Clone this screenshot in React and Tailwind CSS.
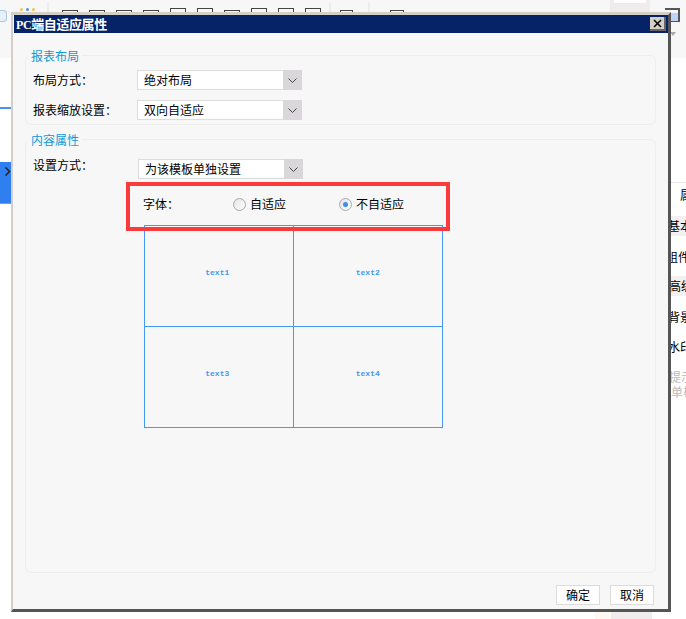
import React from 'react';

const cjk = "font-['Noto_Sans_CJK_SC','Liberation_Sans',sans-serif]";

const Select = ({ value, className = '' }) => (
  <div className={`flex h-5 w-[165px] border border-[#dcdcdc] bg-white ${className}`}>
    <div className="flex-1 pl-[6px] text-[12px] leading-[18px] text-black">{value}</div>
    <div className="-my-px -mr-px flex w-[19px] items-center justify-center bg-[#d9d7d9]">
      <svg width="9" height="5" viewBox="0 0 9 5" fill="none" stroke="#444" strokeWidth="1">
        <path d="M.5.5l4 4 4-4" />
      </svg>
    </div>
  </div>
);

const Group = ({ title, className = '', children }) => (
  <div className={`relative rounded-md border border-[#eeeeee] ${className}`}>
    <span className="absolute -top-[9px] left-[2px] bg-[#f7f7f7] px-[3px] text-[12px] leading-[18px] text-[#0d9ad8]">{title}</span>
    {children}
  </div>
);

const Radio = ({ checked, label }) => (
  <div className="flex items-center gap-1">
    <div className="flex h-[13px] w-[13px] items-center justify-center rounded-full border border-[#a9a9a9] bg-gradient-to-br from-[#e4e4e4] to-white">
      {checked && <div className="h-[5px] w-[5px] rounded-full bg-[#3d8cf0]" />}
    </div>
    <span className="text-[12px] leading-4 text-black">{label}</span>
  </div>
);

const Cell = ({ text, className = '' }) => (
  <div className={`flex items-center justify-center border-[#4499f5] pb-[6px] font-['Liberation_Mono',monospace] text-[8px] font-bold text-[#4499f5] ${className}`}>
    {text}
  </div>
);

const ToolIcon = ({ tall, className = '' }) => (
  <div className={`w-4 shrink-0 border border-b-0 border-[#444] ${tall ? 'mt-2 h-[6px]' : 'mt-[10px] h-1'} ${className}`} />
);

const Separator = ({ className = '' }) => <div className={`mt-[2px] h-[11px] w-[2px] shrink-0 bg-[#efeceb] ${className}`} />;

const App = () => {
  return (
    <div className={`relative flex h-[619px] w-[686px] flex-col overflow-hidden bg-white ${cjk}`}>
      {/* toolbar behind the dialog */}
      <div className="flex h-[58px] shrink-0 items-start bg-[#f7f7f7]">
        <div className="mt-[10px] h-[12px] w-[7px] shrink-0 rounded-r-sm border border-l-0 border-[#a8c8e0] bg-[#e6f0f8]" />
        <div className="ml-[13px] mt-2 flex shrink-0 gap-[3px]">
          <div className="h-[3px] w-[3px] rounded-full bg-[#f5c242]" />
          <div className="h-[3px] w-[3px] rounded-full bg-[#4a90f0]" />
          <div className="h-[3px] w-[3px] rounded-full bg-[#f5c242]" />
        </div>
        <Separator className="ml-[12px]" />
        <div className="ml-[13px] flex shrink-0 gap-[11px]">
          <ToolIcon />
          <ToolIcon />
          <ToolIcon />
          <ToolIcon />
          <ToolIcon tall />
          <ToolIcon tall />
          <ToolIcon />
          <ToolIcon tall />
          <ToolIcon tall />
          <ToolIcon tall />
        </div>
        <Separator className="ml-[8px]" />
        <ToolIcon className="ml-[9px] w-[13px]" />
        <Separator className="ml-[15px]" />
        <ToolIcon className="ml-[20px] w-[14px]" />
        <div className="ml-[206px] h-[12px] w-[40px] shrink-0 bg-[#f0ecee] px-1">
          <div className="h-[3px] bg-white" />
        </div>
        <div className="ml-[15px] flex shrink-0 flex-col items-center">
          <div className="mt-2 h-[14px] w-[15px] border-2 border-[#555] border-l-0 pt-[3px]">
            <div className="h-[8px] bg-[#bcd4f8]" />
          </div>
          <div className="mt-[10px] h-0 w-0 border-x-[3px] border-t-[4px] border-x-transparent border-t-[#aaaaaa]" />
        </div>
      </div>

      <div className="flex h-[554px] shrink-0 justify-between">
        {/* left edge of the page */}
        <div className="w-[11px]">
          <div className="mt-[49px] h-[2px] bg-[#4a90f0]" />
          <div className="mt-[53px] flex h-[42px] items-start justify-end border-b border-[#999] bg-[#2f7ff0] pt-[5px]">
            <svg width="6" height="9" viewBox="0 0 6 9" fill="none" stroke="#222" strokeWidth="1.5">
              <path d="M.5.5l4 4-4 4" />
            </svg>
          </div>
        </div>

        {/* right side panel */}
        <div className="flex w-[15px] flex-col overflow-hidden whitespace-nowrap pt-[124px] text-[12px] text-black">
          <div className="h-[34px] border-t border-[#e6e6e6] pl-[9px] leading-[23px]">属</div>
          <div className="h-5 bg-[#f2f0f0] indent-[-3px] leading-5">基本</div>
          <div className="mt-[11px] h-5 indent-[-5px] leading-5">组件</div>
          <div className="mt-[9px] h-5 bg-[#f2f0f0] indent-[-2px] leading-5">高级</div>
          <div className="mt-[11px] h-5 indent-[-3px] leading-5">背景</div>
          <div className="mt-[10px] h-5 indent-[-3px] leading-5">水印</div>
          <div className="mt-[12px] indent-[-2px] leading-[15px] text-[#bbbbbb]">提示<br />单栏</div>
        </div>
      </div>

      <div className="flex h-[7px] shrink-0 pl-[595px]">
        <div className="w-4 bg-[#fdf8f3]" />
        <div className="w-[41px] bg-[#f0ecee]" />
      </div>

      {/* dialog */}
      <div className="absolute left-[11px] top-[12px] flex h-[600px] w-[660px] flex-col border-b-[3px] border-l-2 border-r-[3px] border-t-[3px] border-b-[#555] border-l-[#d4d0c8] border-r-[#555] border-t-[#d4d0c8] bg-[#f7f7f7]">
        <div className="ml-[1px] flex h-[18px] shrink-0 items-center justify-between bg-[#062368] pl-[2px] pr-[2px]">
          <span className="text-[13px] font-bold leading-none tracking-[-0.4px] text-white">
            <span className="font-['Liberation_Serif',serif] text-[12px]">PC</span>端自适应属性
          </span>
          <div className="flex h-[14px] w-4 items-center justify-center border-b-2 border-r-2 border-b-[#666] border-r-[#666] bg-[#d4d0c8]">
            <svg width="9" height="9" viewBox="0 0 9 9" stroke="#000" strokeWidth="1.6">
              <path d="M1 1l7 7M8 1L1 8" />
            </svg>
          </div>
        </div>

        <div className="flex flex-1 flex-col px-[12px] pt-[22px]">
          <Group title="报表布局" className="h-[70px] shrink-0">
            <div className="flex items-center pl-[7px] pt-[14px]">
              <span className="w-[104px] text-[12px] text-black">布局方式：</span>
              <Select value="绝对布局" />
            </div>
            <div className="mt-[10px] flex items-center pl-[7px]">
              <span className="w-[104px] text-[12px] text-black">报表缩放设置：</span>
              <Select value="双向自适应" />
            </div>
          </Group>

          <Group title="内容属性" className="mt-[14px] flex-1">
            <div className="flex pl-[7px] pt-[17px]">
              <span className="w-[105px] text-[12px] leading-4 text-black">设置方式：</span>
              <Select value="为该模板单独设置" className="mt-[2px]" />
            </div>
            <div className="relative z-10 ml-[100px] mt-[3px] flex h-[49px] w-[324px] items-center border-4 border-[#fb3b3b] pb-[5px] pl-[13px]">
              <span className="w-[90px] text-[12px] leading-4 text-black">字体：</span>
              <Radio label="自适应" />
              <div className="w-[53px]" />
              <Radio checked label="不自适应" />
            </div>
            <div className="-mt-[6px] ml-[118px] grid h-[203px] w-[299px] grid-cols-2 grid-rows-2 border border-[#4499f5]">
              <Cell text="text1" className="border-b border-r pr-[3px]" />
              <Cell text="text2" className="border-b" />
              <Cell text="text3" className="border-r pr-[3px]" />
              <Cell text="text4" />
            </div>
          </Group>

          <div className="flex h-[36px] shrink-0 items-start justify-end gap-[10px] pr-[2px] pt-[12px]">
            <button className="h-5 w-[44px] border border-[#dcdcdc] bg-white text-[12px] leading-none text-black">确定</button>
            <button className="h-5 w-[44px] border border-[#dcdcdc] bg-white text-[12px] leading-none text-black">取消</button>
          </div>
        </div>
      </div>
    </div>
  );
};

export default App;
